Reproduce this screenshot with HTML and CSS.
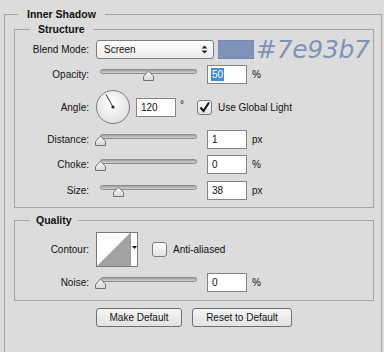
FILE: index.html
```html
<!DOCTYPE html>
<html>
<head>
<meta charset="utf-8">
<link rel="stylesheet" href="styles.css">
</head>
<body>
<fieldset class="group outer">
  <legend class="title outer-title">Inner Shadow</legend>
  <fieldset class="group inner structure">
    <legend class="title inner-title">Structure</legend>

    <div class="row h19 gap6">
      <span class="label">Blend Mode:</span>
      <div class="select">
        <span class="select-text">Screen</span>
        <svg class="select-arrows" width="7" height="9" viewBox="0 0 7 9"><path d="M0.5 3.5 L3.5 0.5 L6.5 3.5 Z M0.5 5.5 L3.5 8.5 L6.5 5.5 Z" fill="#222"/></svg>
      </div>
      <div class="swatch"></div>
      <span class="hex">#7e93b7</span>
    </div>

    <div class="row h19 gap6">
      <span class="label">Opacity:</span>
      <div class="slider">
        <div class="track"></div>
        <svg class="thumb" style="left:47px" width="11" height="10" viewBox="0 0 11 10"><defs><linearGradient id="tg1" x1="0" y1="0" x2="0" y2="1"><stop offset="0" stop-color="#fafafa"/><stop offset="1" stop-color="#d6d6d6"/></linearGradient></defs><path d="M0.5 9.5 V5.5 L4.5 1 Q5.5 0 6.5 1 L10.5 5.5 V9.5 Z" fill="url(#tg1)" stroke="#747474"/></svg>
      </div>
      <div class="field"><span class="selected">50</span></div>
      <span class="unit">%</span>
    </div>

    <div class="row h34 gap6">
      <span class="label">Angle:</span>
      <svg class="dial" width="34" height="34" viewBox="0 0 34 34"><defs><radialGradient id="dg" cx="0.45" cy="0.4" r="0.65"><stop offset="0" stop-color="#ffffff"/><stop offset="1" stop-color="#dedede"/></radialGradient></defs><circle cx="17" cy="17" r="16.5" fill="url(#dg)" stroke="#7d7d7d"/><line x1="17" y1="17" x2="10" y2="4.5" stroke="#3a3a3a" stroke-width="1"/><circle cx="17" cy="17" r="1.6" fill="#2a2a2a"/></svg>
      <div class="field angle-field">120</div>
      <span class="deg">°</span>
      <span class="check checked"><svg width="13" height="13" viewBox="0 0 13 13"><path d="M2.5 6.5 L5.5 10 L11 1.5" fill="none" stroke="#111" stroke-width="2"/></svg></span>
      <span class="check-label">Use Global Light</span>
    </div>

    <div class="row h19 gap6">
      <span class="label">Distance:</span>
      <div class="slider">
        <div class="track"></div>
        <svg class="thumb" style="left:-1px" width="11" height="10" viewBox="0 0 11 10"><path d="M0.5 9.5 V5.5 L4.5 1 Q5.5 0 6.5 1 L10.5 5.5 V9.5 Z" fill="url(#tg1)" stroke="#747474"/></svg>
      </div>
      <div class="field">1</div>
      <span class="unit">px</span>
    </div>

    <div class="row h19 gap7">
      <span class="label">Choke:</span>
      <div class="slider">
        <div class="track"></div>
        <svg class="thumb" style="left:-1px" width="11" height="10" viewBox="0 0 11 10"><path d="M0.5 9.5 V5.5 L4.5 1 Q5.5 0 6.5 1 L10.5 5.5 V9.5 Z" fill="url(#tg1)" stroke="#747474"/></svg>
      </div>
      <div class="field">0</div>
      <span class="unit">%</span>
    </div>

    <div class="row h19">
      <span class="label">Size:</span>
      <div class="slider">
        <div class="track"></div>
        <svg class="thumb" style="left:17px" width="11" height="10" viewBox="0 0 11 10"><path d="M0.5 9.5 V5.5 L4.5 1 Q5.5 0 6.5 1 L10.5 5.5 V9.5 Z" fill="url(#tg1)" stroke="#747474"/></svg>
      </div>
      <div class="field">38</div>
      <span class="unit">px</span>
    </div>
  </fieldset>

  <fieldset class="group inner quality">
    <legend class="title inner-title quality-title">Quality</legend>

    <div class="row h35 gap6">
      <span class="label">Contour:</span>
      <div class="contour">
        <svg class="contour-preview" width="33" height="33" viewBox="0 0 33 33"><rect width="33" height="33" fill="#ffffff"/><path d="M0 33 L33 0 L33 33 Z" fill="#a2a2a2"/></svg>
        <div class="contour-drop"><svg width="5" height="3" viewBox="0 0 5 3"><path d="M0 0 H5 L2.5 3 Z" fill="#111"/></svg></div>
      </div>
      <span class="check anti"></span>
      <span class="check-label">Anti-aliased</span>
    </div>

    <div class="row h19">
      <span class="label">Noise:</span>
      <div class="slider">
        <div class="track"></div>
        <svg class="thumb" style="left:-1px" width="11" height="10" viewBox="0 0 11 10"><path d="M0.5 9.5 V5.5 L4.5 1 Q5.5 0 6.5 1 L10.5 5.5 V9.5 Z" fill="url(#tg1)" stroke="#747474"/></svg>
      </div>
      <div class="field">0</div>
      <span class="unit">%</span>
    </div>
  </fieldset>

  <div class="buttons">
    <button class="btn btn-make">Make Default</button>
    <button class="btn btn-reset">Reset to Default</button>
  </div>
</fieldset>
</body>
</html>
```

FILE: styles.css
```css
html, body {
  margin: 0;
  padding: 0;
  background: #dcdcdc;
  width: 384px;
  height: 352px;
  overflow: hidden;
}

body {
  font-family: "Liberation Sans", Arial, sans-serif;
  font-size: 10px;
  color: #111;
}

.group {
  margin: 0;
  padding: 0;
  border: 1px solid #a4a4a4;
  min-width: 0;
}

.outer {
  margin: 7px 2px 0 4px;
  padding: 1px 7px 40px 9px;
}

.title {
  font-weight: bold;
  font-size: 10.5px;
  line-height: 14px;
  color: #111;
}

.outer-title {
  margin-left: 4px;
  padding: 0 9px;
}

.inner-title {
  margin-left: 15px;
  padding: 0 8px;
}

.quality-title {
  padding: 0 6px;
}

.structure {
  padding: 4px 0 7px 0;
}

.quality {
  margin-top: 5px;
  padding: 5px 0 8px 0;
}

.row {
  display: flex;
  align-items: center;
}

.h19 { height: 19px; }
.h34 { height: 34px; }
.h35 { height: 35px; }
.gap6 { margin-bottom: 6px; }
.gap7 { margin-bottom: 7px; }

.label {
  width: 74px;
  margin-right: 7px;
  text-align: right;
  white-space: nowrap;
}

.select {
  box-sizing: border-box;
  width: 118px;
  height: 19px;
  border: 1px solid #7f7f7f;
  border-radius: 3px;
  background: linear-gradient(#ffffff, #ececec);
  display: flex;
  align-items: center;
  justify-content: space-between;
  padding: 0 5px 0 7px;
}

.select-arrows {
  display: block;
}

.swatch {
  box-sizing: border-box;
  width: 36px;
  height: 19px;
  margin-left: 4px;
  background: #7e93b7;
  border: 1px solid #7589ad;
}

.hex {
  margin-left: 2px;
  font-family: "DejaVu Sans", sans-serif;
  font-style: italic;
  font-size: 25px;
  line-height: 19px;
  color: #7e93b7;
  letter-spacing: -0.3px;
  white-space: nowrap;
}

.slider {
  position: relative;
  width: 104px;
  height: 12px;
  margin-right: 7px;
}

.track {
  box-sizing: border-box;
  margin-left: 4px;
  width: 97px;
  height: 5px;
  border: 1px solid #8c8c8c;
  border-radius: 3px;
  background: linear-gradient(#9d9d9d, #d2d2d2);
}

.thumb {
  position: absolute;
  top: 2px;
  display: block;
}

.field {
  box-sizing: border-box;
  width: 40px;
  height: 19px;
  border: 1px solid #858585;
  background: #ffffff;
  padding-left: 4px;
  line-height: 17px;
  color: #111;
}

.field .selected {
  display: inline-block;
  margin-left: -1px;
  padding: 0 1px;
  line-height: 13px;
  background: #3a8ee6;
  color: #ffffff;
}

.unit {
  margin-left: 5px;
}

.dial {
  display: block;
  margin-right: 6px;
}

.deg {
  box-sizing: border-box;
  width: 21px;
  padding-left: 4px;
  align-self: flex-start;
  margin-top: 9px;
}

.check {
  box-sizing: border-box;
  width: 15px;
  height: 15px;
  border: 1px solid #7d7d7d;
  border-radius: 3px;
  background: linear-gradient(#ffffff, #e2e2e2);
  display: flex;
  align-items: center;
  justify-content: center;
}

.check svg {
  display: block;
}

.check-label {
  margin-left: 6px;
  white-space: nowrap;
}

.contour {
  box-sizing: border-box;
  width: 42px;
  height: 35px;
  border: 1px solid #7a7a7a;
  display: flex;
  background: #ffffff;
}

.contour-preview {
  display: block;
}

.contour-drop {
  flex: 1;
  border-left: 1px solid #9a9a9a;
  display: flex;
  justify-content: center;
  padding-top: 13px;
}

.contour-drop svg {
  display: block;
}

.anti {
  margin-left: 14px;
}

.buttons {
  margin-top: 7px;
  display: flex;
  justify-content: center;
  gap: 10px;
}

.btn {
  box-sizing: border-box;
  height: 19px;
  padding: 0;
  border: 1px solid #707070;
  border-radius: 3px;
  background: linear-gradient(#f6f6f6, #e2e2e2);
  font-family: "Liberation Sans", Arial, sans-serif;
  font-size: 10px;
  color: #111;
}

.btn-make { width: 86px; }
.btn-reset { width: 100px; }
```
